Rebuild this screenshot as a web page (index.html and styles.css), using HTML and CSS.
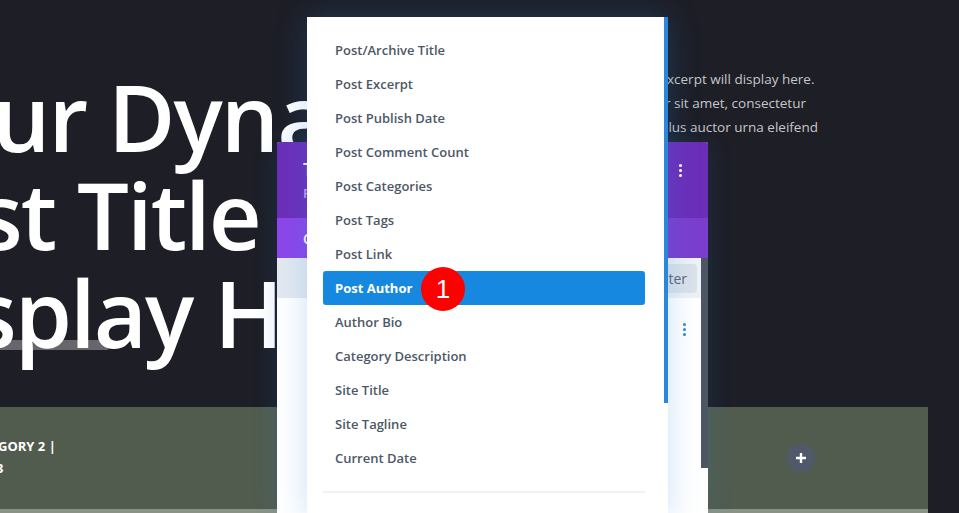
FILE: index.html
```html
<!DOCTYPE html>
<html lang="en">
<head>
<meta charset="utf-8">
<title>Dynamic Content</title>
<link rel="stylesheet" href="styles.css">
</head>
<body>
<div class="page">
  <section class="hero">
    <div class="hero-title">
      <div class="line l1">ur Dynamic</div>
      <div class="line l2">st Title Will</div>
      <div class="line l3">splay Here</div>
    </div>
    <div class="excerpt">
      <p class="e1">xcerpt will display here.</p>
      <p class="e2">r sit amet, consectetur</p>
      <p class="e3">llus auctor urna eleifend</p>
    </div>
  </section>
  <section class="band">
    <div class="meta">
      <div class="meta-1">GORY 2 |</div>
      <div class="meta-2">3</div>
    </div>
    <div class="add">
      <svg width="12" height="12" viewBox="0 0 12 12"><path d="M6 1v10M1 6h10" stroke="#fff" stroke-width="2.4"/></svg>
    </div>
  </section>
  <div class="band-foot"></div>
</div>

<div class="panel">
  <div class="panel-head">
    <div>
      <div class="panel-title">Text Settings</div>
      <div class="panel-sub">Preset: Default</div>
    </div>
    <div class="kebab white"><i></i><i></i><i></i></div>
  </div>
  <div class="panel-tabs"><span>Content</span><span>Design</span><span>Advanced</span></div>
  <div class="panel-main">
    <div class="panel-body">
      <div class="toolbar"><span class="filter">Filter</span></div>
      <div class="row"><div class="kebab blue"><i></i><i></i><i></i></div></div>
    </div>
    <div class="scroll"></div>
  </div>
</div>

<div class="dropdown">
  <div class="list">
    <div class="item">Post/Archive Title</div>
    <div class="item">Post Excerpt</div>
    <div class="item">Post Publish Date</div>
    <div class="item">Post Comment Count</div>
    <div class="item">Post Categories</div>
    <div class="item">Post Tags</div>
    <div class="item">Post Link</div>
    <div class="item sel">Post Author</div>
    <div class="item">Author Bio</div>
    <div class="item">Category Description</div>
    <div class="item">Site Title</div>
    <div class="item">Site Tagline</div>
    <div class="item">Current Date</div>
    <div class="divider"></div>
  </div>
  <div class="thumb"></div>
</div>

<div class="badge">1</div>
</body>
</html>
```

FILE: styles.css
```css
* { box-sizing: border-box; margin: 0; padding: 0; }
html, body { width: 959px; height: 513px; overflow: hidden; }
body {
  background: #1d1e26;
  font-family: "Open Sans", sans-serif;
  position: relative;
}

.hero { display: flex; height: 407px; }
.hero-title {
  flex: none;
  width: 668px;
  overflow: hidden;
  padding-top: 68px;
  color: #fff;
  font-size: 92px;
  line-height: 98px;
  font-weight: 600;
  letter-spacing: -2px;
  white-space: nowrap;
}
.l1 { margin-left: -8px; }
.l2 { margin-left: -22px; }
.l3 {
  margin-left: -28px;
  background: linear-gradient(#67666c, #67666c) no-repeat 28px 76px / 108px 10px;
}
.excerpt {
  padding-top: 67px;
  color: #c6c6cb;
  font-size: 13.5px;
  line-height: 24px;
  white-space: nowrap;
}
.e1 { margin-left: -1px; }
.e2 { margin-left: -3px; }
.e3 { margin-left: -3px; }

.band {
  width: 928px;
  height: 102px;
  background: #515c4f;
  display: flex;
  align-items: center;
}
.meta {
  align-self: flex-start;
  padding-top: 28px;
  color: #fff;
  font-weight: 700;
  font-size: 13px;
  line-height: 22px;
}
.meta-1 { margin-left: -2px; }
.meta-2 { margin-left: -4px; }
.add {
  margin-left: auto;
  margin-right: 113px;
  width: 28px;
  height: 28px;
  border-radius: 50%;
  background: #4f596a;
  display: flex;
  align-items: center;
  justify-content: center;
}
.band-foot { width: 928px; height: 4px; background: #8a9385; }

.panel {
  position: absolute;
  left: 277px;
  top: 142px;
  width: 431px;
  height: 371px;
  background: #fff;
  border-radius: 3px 3px 0 0;
  display: flex;
  flex-direction: column;
  overflow: hidden;
  box-shadow: 0 0 24px rgba(43, 135, 218, 0.18);
}
.panel-head {
  height: 76px;
  flex: none;
  background: #6c2eb9;
  display: flex;
  align-items: center;
  justify-content: space-between;
  padding: 0 26px;
}
.panel-title { font-size: 18px; font-weight: 600; color: #fff; line-height: 22px; }
.panel-sub { font-size: 13px; font-weight: 600; color: #c6a6f2; line-height: 18px; margin-top: 4px; }
.kebab { display: flex; flex-direction: column; gap: 2px; }
.kebab i { display: block; width: 3px; height: 3px; border-radius: 50%; }
.kebab.white { align-self: flex-start; margin-top: 22px; }
.kebab.white i { background: #fff; }
.kebab.blue i { background: #2b87da; }
.panel-tabs {
  height: 40px;
  flex: none;
  background: linear-gradient(90deg, #8d46eb, #7a3dcc);
  display: flex;
  align-items: center;
  gap: 30px;
  padding-left: 26px;
  font-size: 14px;
  font-weight: 600;
  color: #fff;
}
.panel-main { flex: 1; display: flex; }
.panel-body { flex: 1; display: flex; flex-direction: column; }
.toolbar {
  height: 40px;
  background: linear-gradient(90deg, #e3e9f0, #eef2f6);
  display: flex;
  align-items: center;
  justify-content: flex-end;
  padding-right: 4px;
}
.filter {
  height: 29px;
  padding: 0 10px;
  border-radius: 4px;
  background: #dbe2ea;
  color: #5b6775;
  font-size: 14px;
  line-height: 29px;
}
.row { display: flex; justify-content: flex-end; padding: 25px 15px 0 0; }
.scroll { width: 7px; height: 210px; background: #4d5663; flex: none; }

.dropdown {
  position: absolute;
  left: 307px;
  top: 17px;
  width: 361px;
  height: 500px;
  background: #fff;
  display: flex;
  box-shadow: 0 0 30px rgba(43, 135, 218, 0.25);
}
.list { flex: 1; padding: 16px 19px 0 16px; }
.item {
  height: 34px;
  padding-left: 12px;
  font-size: 13px;
  font-weight: 600;
  line-height: 34px;
  color: #4c5866;
  border-radius: 3px;
}
.item.sel { background: #1788df; color: #fff; font-weight: 700; }
.divider { height: 2px; background: #eef3f8; margin-top: 16px; }
.thumb { width: 4px; height: 386px; background: #2b87da; flex: none; }

.badge {
  position: absolute;
  left: 421px;
  top: 267px;
  width: 44px;
  height: 44px;
  border-radius: 50%;
  background: #fe0000;
  color: #fff;
  font-family: "Liberation Sans", Arial, sans-serif;
  font-size: 26px;
  display: flex;
  align-items: center;
  justify-content: center;
}
```
